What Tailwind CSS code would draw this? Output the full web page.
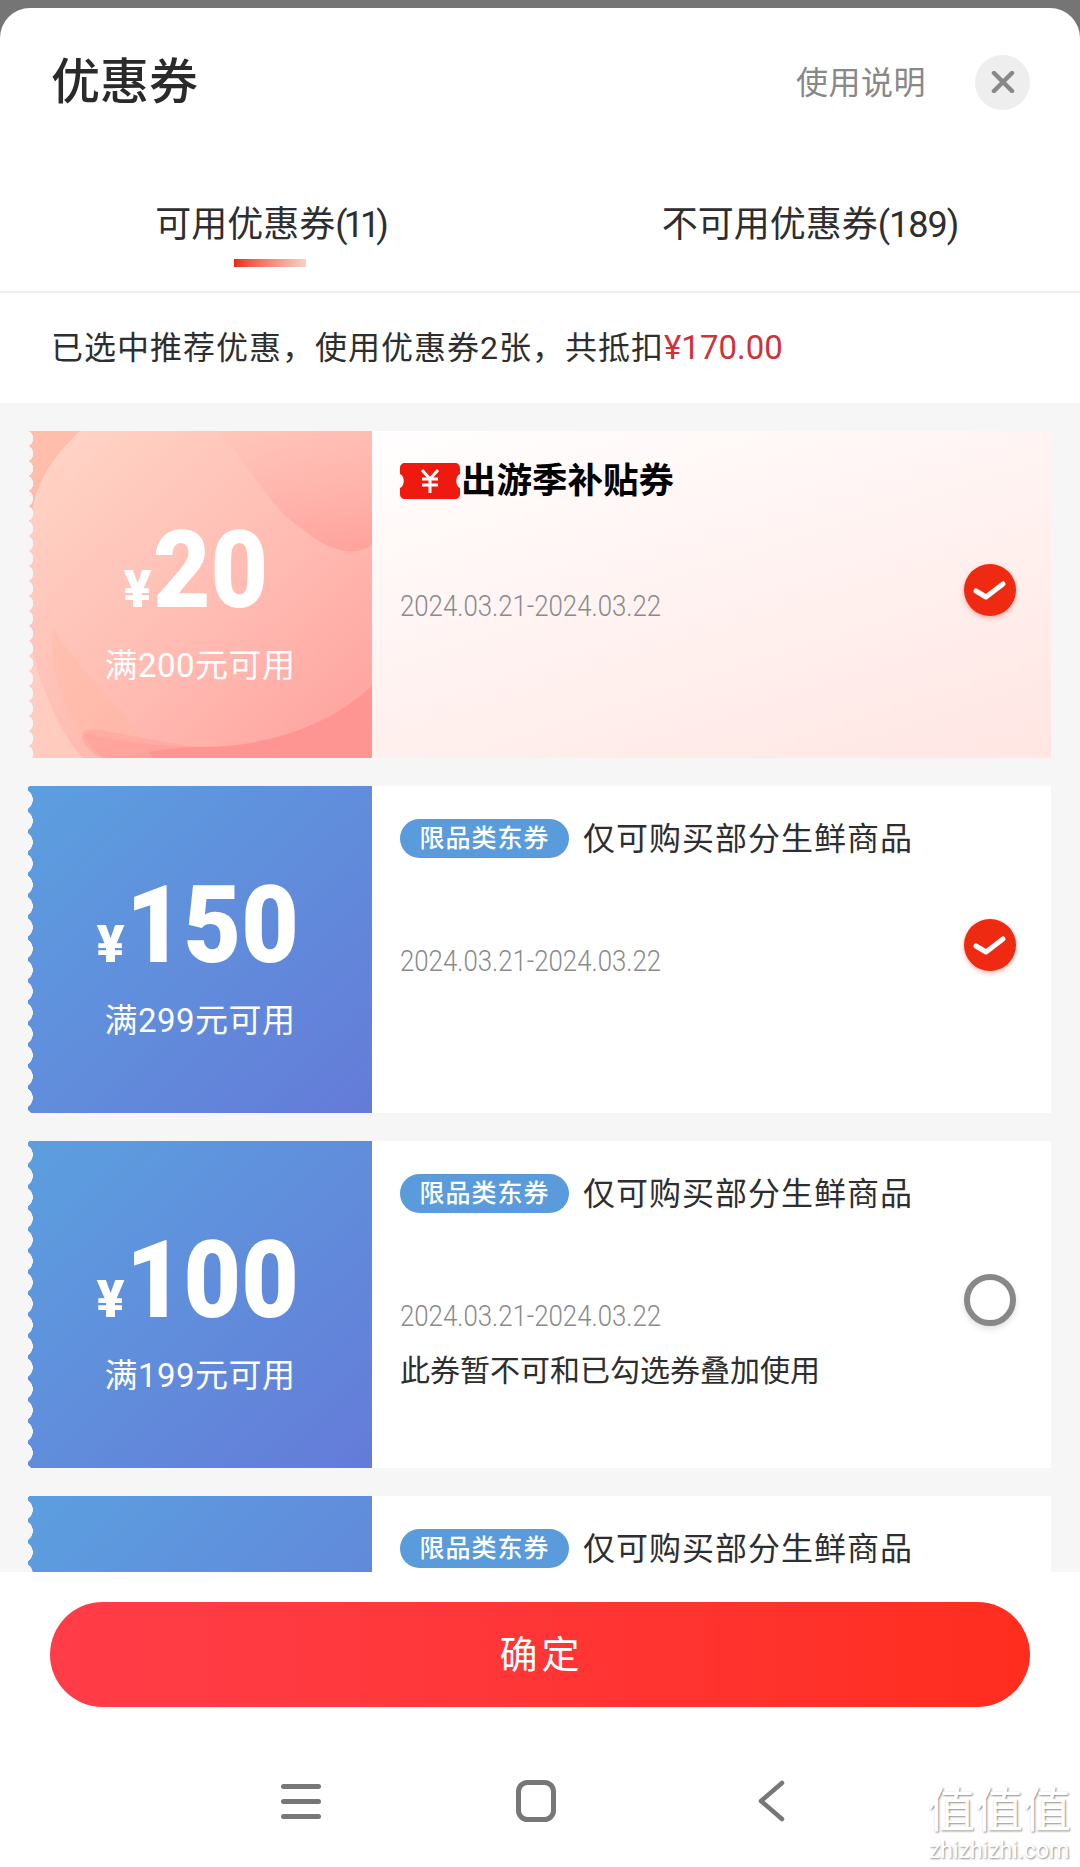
<!DOCTYPE html>
<html lang="zh">
<head>
<meta charset="utf-8">
<script src="https://cdn.jsdelivr.net/npm/@tailwindcss/browser@4"></script>
</head>
<body class="m-0">
<div class="relative w-[1080px] h-[1867px] overflow-hidden bg-[#757575] pt-2 font-['Roboto','Noto_Sans_CJK_SC',sans-serif] text-[#333]">
  <div class="h-full flex flex-col bg-white rounded-t-[30px] overflow-hidden">
    <!-- header -->
    <div class="h-[148px] shrink-0 flex items-center pl-[51px] pr-[50px]">
      <div class="flex-1 text-[49px] leading-none font-medium text-[#2a2a2a]">优惠券</div>
      <div class="mt-[2px] text-[32px] leading-none tracking-[0.5px] text-[#888] mr-[49px]">使用说明</div>
      <div class="w-[55px] h-[55px] rounded-full bg-[#eeeeee] flex items-center justify-center">
        <svg width="24" height="22" viewBox="0 0 24 22" fill="none" stroke="#888888" stroke-width="4.5" stroke-linecap="round"><path d="M3 2 21 20M21 2 3 20"/></svg>
      </div>
    </div>
    <!-- tabs -->
    <div class="h-[137px] shrink-0 grid grid-cols-2 border-b-2 border-[#f0f0f0]">
      <div class="flex flex-col items-center">
        <div class="text-[36px] leading-[48px] text-[#2e2e2e] mt-[45px] whitespace-nowrap">可用优惠券<span class="tracking-[-4px]">(11)</span></div>
        <div class="w-[72px] h-2 mt-[10px] bg-gradient-to-r from-[#e62a10] to-[#f6cfc9]"></div>
      </div>
      <div class="flex flex-col items-center">
        <div class="text-[36px] leading-[48px] text-[#2e2e2e] mt-[45px] whitespace-nowrap">不可用优惠券<span class="tracking-[-1px]">(189)</span></div>
      </div>
    </div>
    <!-- summary -->
    <div class="h-[110px] shrink-0 flex items-center pl-[51px] text-[32px] tracking-[1px] text-[#2e2e2e] whitespace-nowrap">
      已选中推荐优惠，使用优惠券2张，共抵扣<span class="text-[33px] tracking-[0px] text-[#d0323a]">¥170.00</span>
    </div>
    <!-- list -->
    <div class="flex-1 min-h-0 overflow-hidden bg-[#f6f6f6] pl-[28px] pr-[29px] pt-[28px] flex flex-col gap-[28px]">

      <!-- card 1 -->
      <div class="h-[327px] shrink-0 flex bg-gradient-to-br from-white from-15% to-[#ffe6e3]">
        <div class="relative w-[344px] shrink-0 overflow-hidden bg-gradient-to-br from-[#ffd6c8] via-[#ffb9b0] via-60% to-[#ff9f9c]">
          <svg class="absolute inset-0" width="344" height="327" viewBox="0 0 344 327">
            <defs>
              <linearGradient id="wave" x1="0" y1="0" x2="0" y2="1"><stop offset="0" stop-color="#ffb0a8" stop-opacity=".1"/><stop offset="1" stop-color="#ff8f8b" stop-opacity=".5"/></linearGradient>
            </defs>
            <path d="M0 0H52C25 25 10 50 5 75 2 90 1 100 0 110Z" fill="#ffb39f" opacity=".7"/>
            <path d="M190 0C225 40 245 80 272 96 290 112 320 130 344 114V0Z" fill="url(#wave)"/>
            <path d="M344 255C300 295 240 316 172 316 130 316 90 310 55 302 60 312 68 322 76 327H344Z" fill="#ff9593"/>
            <path d="M0 200C10 250 30 300 55 327H0Z" fill="#ffd2c4" opacity=".7"/>
            <path d="M25 196C50 240 95 275 125 327H70C40 290 20 245 25 196Z" fill="#ffb79e" opacity=".35"/>
            <path d="M55 302C60 292 90 305 172 316 130 316 100 327 76 327 62 322 52 312 55 302Z" fill="#ffa79f" opacity=".7"/>
          </svg>
          <div class="absolute inset-y-0 left-0 w-2 bg-[radial-gradient(circle_at_-3px_50%,#f6f6f6_8px,transparent_8.5px)] bg-[length:8px_15px]"></div>
          <div class="relative pt-[84px] flex flex-col items-center">
            <div class="flex items-end h-[110px] pr-[4px] text-white font-black whitespace-nowrap">
              <span class="text-[52px] leading-none mb-[9px] mr-[1px]">¥</span>
              <span class="block w-[120px] text-[108px] leading-[110px] origin-left scale-x-[0.92]">20</span>
            </div>
            <div class="mt-[21px] text-[33px] leading-10 tracking-[0.5px] text-white whitespace-nowrap">满200元可用</div>
          </div>
        </div>
        <div class="flex-1 min-w-0 flex pl-[28px]">
          <div class="flex-1 min-w-0">
            <div class="h-[39px] mt-[30px] flex items-center">
              <svg class="shrink-0" width="60" height="36" viewBox="0 0 60 36"><path d="M5 0H55C58 0 60 2 60 5V11C55 13 55 23 60 25V31C60 34 58 36 55 36H5C2 36 0 34 0 31V25C5 23 5 13 0 11V5C0 2 2 0 5 0Z" fill="#ee1a0f"/><path d="M22 7 30 16 38 7M22 16H38M22 22H38M30 16V30" fill="none" stroke="#fff" stroke-width="3"/></svg>
              <span class="ml-[1px] mt-[2px] text-[35.5px] leading-none font-bold text-black whitespace-nowrap">出游季补贴券</span>
            </div>
            <div class="mt-[86px] text-[30px] leading-10 text-[#8a8a8a] font-light whitespace-nowrap origin-left scale-x-[0.86]">2024.03.21-2024.03.22</div>
          </div>
          <div class="self-start mt-[133px] mr-[35px] w-[52px] h-[52px] rounded-full bg-[#ee2a12] shadow-[0_2px_5px_rgba(238,42,18,0.35)]">
            <svg width="52" height="52" viewBox="0 0 52 52" fill="none" stroke="#fff" stroke-width="5" stroke-linecap="round" stroke-linejoin="round"><path d="M12 27 22 33 39 20"/></svg>
          </div>
        </div>
      </div>

      <!-- card 2 -->
      <div class="h-[327px] shrink-0 flex bg-white">
        <div class="relative w-[344px] shrink-0 overflow-hidden bg-gradient-to-br from-[#5b9fdf] to-[#647bd8]">
          <div class="absolute inset-y-0 left-0 w-2 bg-[radial-gradient(circle_at_-6px_50%,#f6f6f6_10.6px,transparent_11px)] bg-[length:8px_21.3px] bg-[position:0_3px]"></div>
          <div class="relative pt-[84px] flex flex-col items-center">
            <div class="flex items-end h-[110px] pr-[4px] text-white font-black whitespace-nowrap">
              <span class="text-[52px] leading-none mb-[9px] mr-[1px]">¥</span>
              <span class="block w-[174px] text-[108px] leading-[110px] origin-left scale-x-[0.92]">150</span>
            </div>
            <div class="mt-[21px] text-[33px] leading-10 tracking-[0.5px] text-white whitespace-nowrap">满299元可用</div>
          </div>
        </div>
        <div class="flex-1 min-w-0 flex pl-[28px]">
          <div class="flex-1 min-w-0">
            <div class="h-[39px] mt-[33px] flex items-center">
              <span class="h-[39px] w-[169px] rounded-full bg-[#5a9bdc] flex items-center justify-center text-[25px] leading-none font-medium text-white tracking-[1px] whitespace-nowrap">限品类东券</span>
              <span class="ml-[14px] text-[32px] leading-none tracking-[1px] text-[#2e2e2e] whitespace-nowrap">仅可购买部分生鲜商品</span>
            </div>
            <div class="mt-[83px] text-[30px] leading-10 text-[#8a8a8a] font-light whitespace-nowrap origin-left scale-x-[0.86]">2024.03.21-2024.03.22</div>
          </div>
          <div class="self-start mt-[133px] mr-[35px] w-[52px] h-[52px] rounded-full bg-[#ee2a12] shadow-[0_2px_5px_rgba(238,42,18,0.35)]">
            <svg width="52" height="52" viewBox="0 0 52 52" fill="none" stroke="#fff" stroke-width="5" stroke-linecap="round" stroke-linejoin="round"><path d="M12 27 22 33 39 20"/></svg>
          </div>
        </div>
      </div>

      <!-- card 3 -->
      <div class="h-[327px] shrink-0 flex bg-white">
        <div class="relative w-[344px] shrink-0 overflow-hidden bg-gradient-to-br from-[#5b9fdf] to-[#647bd8]">
          <div class="absolute inset-y-0 left-0 w-2 bg-[radial-gradient(circle_at_-6px_50%,#f6f6f6_10.6px,transparent_11px)] bg-[length:8px_21.3px] bg-[position:0_3px]"></div>
          <div class="relative pt-[84px] flex flex-col items-center">
            <div class="flex items-end h-[110px] pr-[4px] text-white font-black whitespace-nowrap">
              <span class="text-[52px] leading-none mb-[9px] mr-[1px]">¥</span>
              <span class="block w-[174px] text-[108px] leading-[110px] origin-left scale-x-[0.92]">100</span>
            </div>
            <div class="mt-[21px] text-[33px] leading-10 tracking-[0.5px] text-white whitespace-nowrap">满199元可用</div>
          </div>
        </div>
        <div class="flex-1 min-w-0 flex pl-[28px]">
          <div class="flex-1 min-w-0">
            <div class="h-[39px] mt-[33px] flex items-center">
              <span class="h-[39px] w-[169px] rounded-full bg-[#5a9bdc] flex items-center justify-center text-[25px] leading-none font-medium text-white tracking-[1px] whitespace-nowrap">限品类东券</span>
              <span class="ml-[14px] text-[32px] leading-none tracking-[1px] text-[#2e2e2e] whitespace-nowrap">仅可购买部分生鲜商品</span>
            </div>
            <div class="mt-[83px] text-[30px] leading-10 text-[#8a8a8a] font-light whitespace-nowrap origin-left scale-x-[0.86]">2024.03.21-2024.03.22</div>
            <div class="mt-[15px] text-[30px] leading-10 text-[#2e2e2e] whitespace-nowrap">此券暂不可和已勾选券叠加使用</div>
          </div>
          <div class="self-start mt-[133px] mr-[35px] w-[52px] h-[52px] rounded-full border-[6px] border-[#888888] bg-white shadow-[0_3px_6px_rgba(0,0,0,0.12)]"></div>
        </div>
      </div>

      <!-- card 4 (cut by the footer) -->
      <div class="h-[327px] shrink-0 flex bg-white">
        <div class="relative w-[344px] shrink-0 overflow-hidden bg-gradient-to-br from-[#5b9fdf] to-[#647bd8]">
          <div class="absolute inset-y-0 left-0 w-2 bg-[radial-gradient(circle_at_-6px_50%,#f6f6f6_10.6px,transparent_11px)] bg-[length:8px_21.3px] bg-[position:0_3px]"></div>
        </div>
        <div class="flex-1 min-w-0 pl-[28px]">
          <div class="h-[39px] mt-[33px] flex items-center">
            <span class="h-[39px] w-[169px] rounded-full bg-[#5a9bdc] flex items-center justify-center text-[25px] leading-none font-medium text-white tracking-[1px] whitespace-nowrap">限品类东券</span>
            <span class="ml-[14px] text-[32px] leading-none tracking-[1px] text-[#2e2e2e] whitespace-nowrap">仅可购买部分生鲜商品</span>
          </div>
        </div>
      </div>
    </div>
    <!-- footer -->
    <div class="h-[295px] shrink-0 bg-white pt-[30px] pl-[50px] pr-[50px]">
      <div class="h-[105px] rounded-full bg-gradient-to-r from-[#ff3d48] to-[#ff2d1d] flex items-center justify-center pt-[1px] pl-[3px] text-[38px] font-normal text-white tracking-[4px]">确定</div>
      <div class="mt-[73px] ml-[231px] flex items-center">
        <svg width="40" height="38" viewBox="0 0 40 38" fill="#777777"><rect y="2" width="40" height="5" rx="2.5"/><rect y="17" width="40" height="5" rx="2.5"/><rect y="32" width="40" height="5" rx="2.5"/></svg>
        <svg class="ml-[195px]" width="40" height="42" viewBox="0 0 40 42" fill="none" stroke="#777777" stroke-width="5"><rect x="2.5" y="2.5" width="35" height="37" rx="9"/></svg>
        <svg class="ml-[201px]" width="28" height="42" viewBox="0 0 28 42" fill="none" stroke="#777777" stroke-width="4.5" stroke-linecap="round" stroke-linejoin="round"><path d="M25 3 4 21 25 39"/></svg>
      </div>
    </div>
  </div>
  <!-- watermark -->
  <div class="absolute left-[926px] top-[1787px] w-[146px] text-white [text-shadow:1px_1px_2px_rgba(0,0,0,0.45)] text-center">
    <div class="text-[48px] leading-[48px] whitespace-nowrap">值值值</div>
    <div class="mt-[5px] text-[23px] leading-[22px] whitespace-nowrap">zhizhizhi.com</div>
  </div>
</div>
</body>
</html>
